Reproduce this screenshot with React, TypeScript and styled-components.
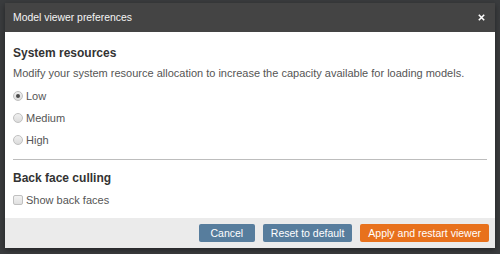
import React, { useState } from "react";
import styled, { createGlobalStyle } from "styled-components";

const Global = createGlobalStyle`
  html, body { margin: 0; padding: 0; }
  body {
    width: 500px;
    height: 254px;
    background: #3a3c3e;
    font-family: "Liberation Sans", Arial, sans-serif;
    overflow: hidden;
  }
`;

const Backdrop = styled.div`
  width: 500px;
  height: 254px;
  box-sizing: border-box;
  padding: 3px 5px 6px 5px;
  display: flex;
`;

const Dialog = styled.div`
  flex: 1;
  display: flex;
  flex-direction: column;
  background: #ffffff;
  box-shadow: 0 2px 6px rgba(0, 0, 0, 0.4);
`;

const Header = styled.div`
  height: 29px;
  flex: none;
  background: #444444;
  color: #f4f4f4;
  display: flex;
  align-items: center;
  justify-content: space-between;
  padding: 0 10px 0 8px;
  font-size: 10.4px;
`;

const Close = styled.button`
  border: none;
  background: transparent;
  padding: 0;
  width: 8px;
  height: 8px;
  display: flex;
  align-items: center;
  justify-content: center;
  cursor: pointer;
`;

const Body = styled.div`
  flex: 1;
  padding: 14px 8px 0 8px;
  color: #555555;
`;

const SectionTitle = styled.h3<{ $gap?: number }>`
  margin: ${(p) => p.$gap ?? 0}px 0 0 0;
  font-size: 12px;
  font-weight: bold;
  color: #333333;
  line-height: 14px;
`;

const Description = styled.p`
  margin: 6px 0 0 0;
  font-size: 11px;
  line-height: 14px;
  color: #555555;
`;

const OptionList = styled.div<{ $top: number }>`
  display: flex;
  flex-direction: column;
  gap: 8px;
  margin-top: ${(p) => p.$top}px;
`;

const OptionRow = styled.label`
  display: flex;
  align-items: center;
  gap: 3px;
  font-size: 11px;
  line-height: 14px;
  color: #555555;
  height: 14px;
`;

const RadioDot = styled.span<{ $on: boolean }>`
  width: 10px;
  height: 10px;
  border-radius: 50%;
  box-sizing: border-box;
  border: 1px solid #c0c0c0;
  background: linear-gradient(#f0f0f0, #dcdcdc);
  display: flex;
  align-items: center;
  justify-content: center;
  &::after {
    content: "";
    width: 4px;
    height: 4px;
    border-radius: 50%;
    background: #4a4a4a;
    display: ${(p) => (p.$on ? "block" : "none")};
  }
`;

const Box = styled.span`
  width: 10px;
  height: 10px;
  border-radius: 2px;
  box-sizing: border-box;
  border: 1px solid #c0c0c0;
  background: linear-gradient(#f2f2f2, #e0e0e0);
`;

const Divider = styled.hr`
  border: none;
  border-top: 1px solid #bdbdbd;
  margin: 12px 0 0 0;
`;

const Footer = styled.div`
  height: 30px;
  flex: none;
  background: #ebebeb;
  display: flex;
  align-items: center;
  justify-content: flex-end;
  gap: 8px;
  padding: 0 6px;
`;

const Button = styled.button<{ $variant?: "primary" | "secondary"; $min?: number }>`
  height: 18px;
  min-width: ${(p) => p.$min ?? 0}px;
  border: none;
  border-radius: 2px;
  padding: 0 8px;
  font-family: "Liberation Sans", Arial, sans-serif;
  font-size: 10.5px;
  color: #ffffff;
  background: ${(p) => (p.$variant === "primary" ? "#e8711c" : "#577d9d")};
  cursor: pointer;
`;

export default function App() {
  const [level, setLevel] = useState("Low");
  return (
    <>
      <Global />
      <Backdrop>
        <Dialog>
          <Header>
            <span>Model viewer preferences</span>
            <Close aria-label="Close">
              <svg width="7" height="7" viewBox="0 0 7 7">
                <path d="M0.8 0.8 L6.2 6.2 M6.2 0.8 L0.8 6.2" stroke="#fff" strokeWidth="1.6" />
              </svg>
            </Close>
          </Header>
          <Body>
            <SectionTitle>System resources</SectionTitle>
            <Description>
              Modify your system resource allocation to increase the capacity available for loading models.
            </Description>
            <OptionList $top={9}>
              {["Low", "Medium", "High"].map((l) => (
                <OptionRow key={l} onClick={() => setLevel(l)}>
                  <RadioDot $on={level === l} />
                  {l}
                </OptionRow>
              ))}
            </OptionList>
            <Divider />
            <SectionTitle $gap={11}>Back face culling</SectionTitle>
            <OptionList $top={8}>
              <OptionRow>
                <Box />
                Show back faces
              </OptionRow>
            </OptionList>
          </Body>
          <Footer>
            <Button $min={56}>Cancel</Button>
            <Button>Reset to default</Button>
            <Button $variant="primary">Apply and restart viewer</Button>
          </Footer>
        </Dialog>
      </Backdrop>
    </>
  );
}
